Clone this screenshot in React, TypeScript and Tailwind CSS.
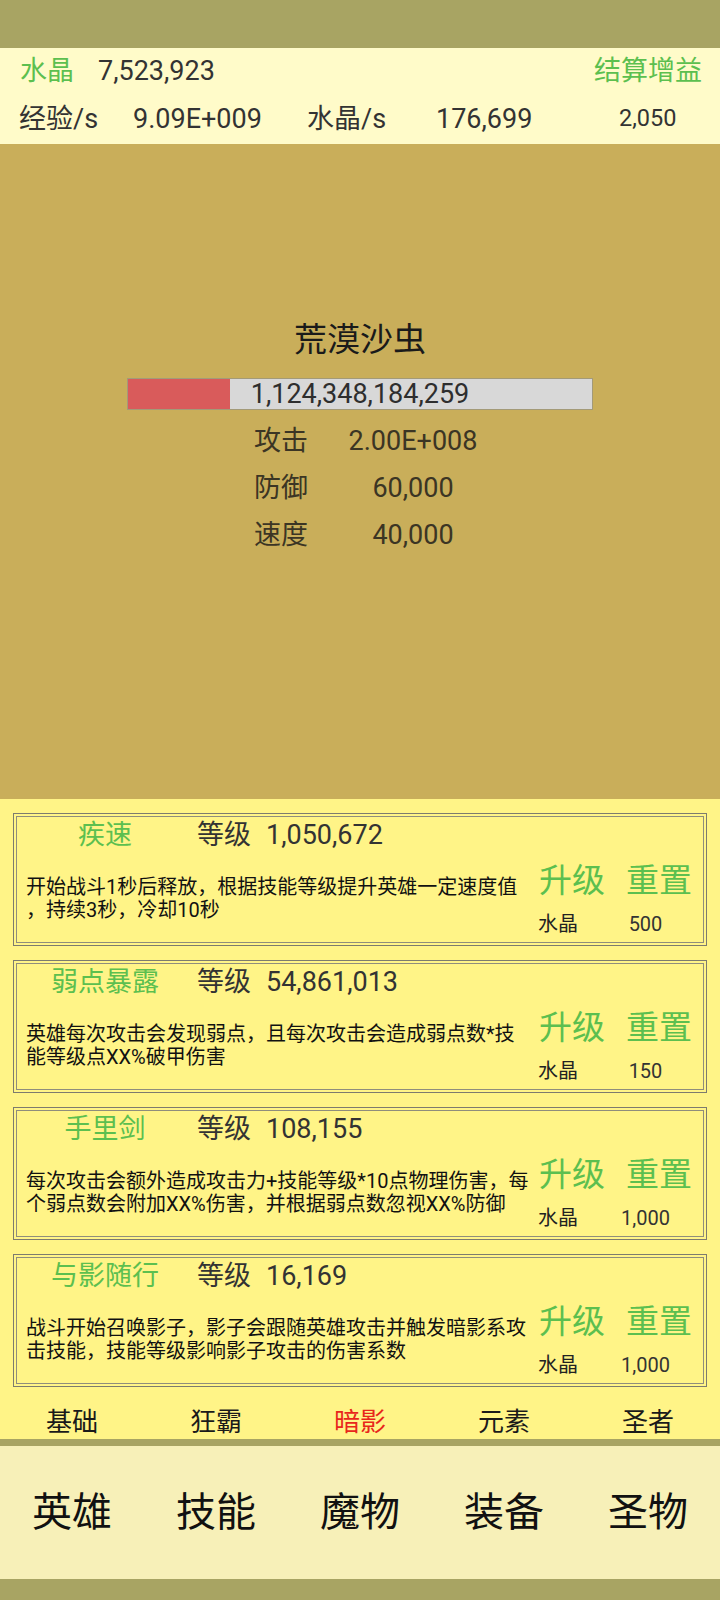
import React from 'react';

const font = { fontFamily: '"Roboto", "Noto Sans CJK SC", sans-serif' };

type Skill = {
  name: string;
  level: string;
  lines: string[];
  cost: string;
};

const skills: Skill[] = [
  {
    name: '疾速',
    level: '1,050,672',
    lines: ['开始战斗1秒后释放，根据技能等级提升英雄一定速度值', '，持续3秒，冷却10秒'],
    cost: '500',
  },
  {
    name: '弱点暴露',
    level: '54,861,013',
    lines: ['英雄每次攻击会发现弱点，且每次攻击会造成弱点数*技', '能等级点XX%破甲伤害'],
    cost: '150',
  },
  {
    name: '手里剑',
    level: '108,155',
    lines: ['每次攻击会额外造成攻击力+技能等级*10点物理伤害，每', '个弱点数会附加XX%伤害，并根据弱点数忽视XX%防御'],
    cost: '1,000',
  },
  {
    name: '与影随行',
    level: '16,169',
    lines: ['战斗开始召唤影子，影子会跟随英雄攻击并触发暗影系攻', '击技能，技能等级影响影子攻击的伤害系数'],
    cost: '1,000',
  },
];

const tabs = ['基础', '狂霸', '暗影', '元素', '圣者'];
const nav = ['英雄', '技能', '魔物', '装备', '圣物'];

function SkillCard({ skill }: { skill: Skill }) {
  return (
    <div className="mx-[13px] h-[133px] shrink-0 border border-[#7d7b6e] p-[2px]">
      <div className="flex h-full flex-col border border-[#8f8d7c]">
        <div className="flex h-[36px] shrink-0 items-center text-[27px] text-[#333]">
          <span className="w-[176px] text-center text-[#5cbf4f]">{skill.name}</span>
          <span className="ml-[4px]">等级</span>
          <span className="ml-[15px]">{skill.level}</span>
        </div>
        <div className="flex min-h-0 flex-1">
          <div className="flex min-w-0 flex-1 flex-col justify-center pl-[9px] pt-[3px] text-[20px] leading-[23px] text-[#111]">
            {skill.lines.map((l) => (
              <div key={l} className="whitespace-nowrap">{l}</div>
            ))}
          </div>
          <div className="flex w-[172px] shrink-0 flex-col">
            <div className="mt-[7px] flex h-[42px] items-center whitespace-nowrap text-[33px] text-[#5cbf4f]">
              <span className="ml-[8px]">升级</span>
              <span className="ml-[21px]">重置</span>
            </div>
            <div className="mt-[10px] flex h-[24px] items-center whitespace-nowrap text-[20px] text-[#222]">
              <span className="ml-[7px]">水晶</span>
              <span className="ml-[10px] w-[136px] text-center text-[#333]">{skill.cost}</span>
            </div>
          </div>
        </div>
      </div>
    </div>
  );
}

export default function App() {
  return (
    <div className="flex h-[1600px] w-[720px] flex-col bg-[#a8a463]" style={font}>
      <div className="h-[48px] shrink-0 bg-[#a8a463]" />

      {/* header */}
      <div className="h-[96px] shrink-0 bg-[#fffbc9] text-[#333]">
        <div className="flex h-[46px] items-center pl-[20px] text-[27px]">
          <span className="w-[78px] text-[#5cbf4f]">水晶</span>
          <span>7,523,923</span>
          <span className="ml-auto pr-[18px] text-[#5cbf4f]">结算增益</span>
        </div>
        <div className="flex h-[50px] items-center pl-[19px] text-[27px]">
          <span className="w-[114px]">经验/s</span>
          <span className="w-[174px]">9.09E+009</span>
          <span className="w-[129px]">水晶/s</span>
          <span className="w-[183px]">176,699</span>
          <span className="text-[23.5px]">2,050</span>
        </div>
      </div>

      {/* battle */}
      <div className="flex h-[655px] shrink-0 flex-col bg-[#c9ae5a] pt-[176px]">
        <div className="h-[40px] text-center text-[33px] leading-[40px] text-[#1a1a1a]">荒漠沙虫</div>
        <div className="relative mx-auto mt-[18px] h-[32px] w-[466px] border border-[#a39a78] bg-[#d8d8d8]">
          <div className="absolute left-0 top-0 h-full w-[102px] bg-[#d95b5b]" />
          <div className="relative text-center text-[27px] leading-[30px] text-[#2e2e2e]">1,124,348,184,259</div>
        </div>
        <div className="ml-[254px] mt-[8px] text-[27px] text-[#3b3524]">
          {[
            ['攻击', '2.00E+008'],
            ['防御', '60,000'],
            ['速度', '40,000'],
          ].map(([k, v]) => (
            <div key={k} className="flex h-[47px] items-center">
              <span className="w-[93px]">{k}</span>
              <span className="w-[132px] text-center">{v}</span>
            </div>
          ))}
        </div>
      </div>

      {/* skills */}
      <div className="flex h-[640px] shrink-0 flex-col gap-[14px] bg-[#fff487] pt-[14px]">
        {skills.map((s) => (
          <SkillCard key={s.name} skill={s} />
        ))}
        <div className="mt-auto grid h-[36px] shrink-0 grid-cols-5 items-center text-[26px] text-[#1a1a1a]">
          {tabs.map((t) => (
            <span key={t} className={`text-center ${t === '暗影' ? 'text-[#e8261b]' : ''}`}>
              {t}
            </span>
          ))}
        </div>
      </div>

      <div className="h-[7px] shrink-0 bg-[#a8a463]" />

      {/* bottom nav */}
      <div className="grid h-[133px] shrink-0 grid-cols-5 items-center bg-[#f7f0b8] text-[40px] text-[#111]">
        {nav.map((n) => (
          <span key={n} className="text-center">{n}</span>
        ))}
      </div>
      <div className="flex-1 bg-[#a8a463]" />
    </div>
  );
}
